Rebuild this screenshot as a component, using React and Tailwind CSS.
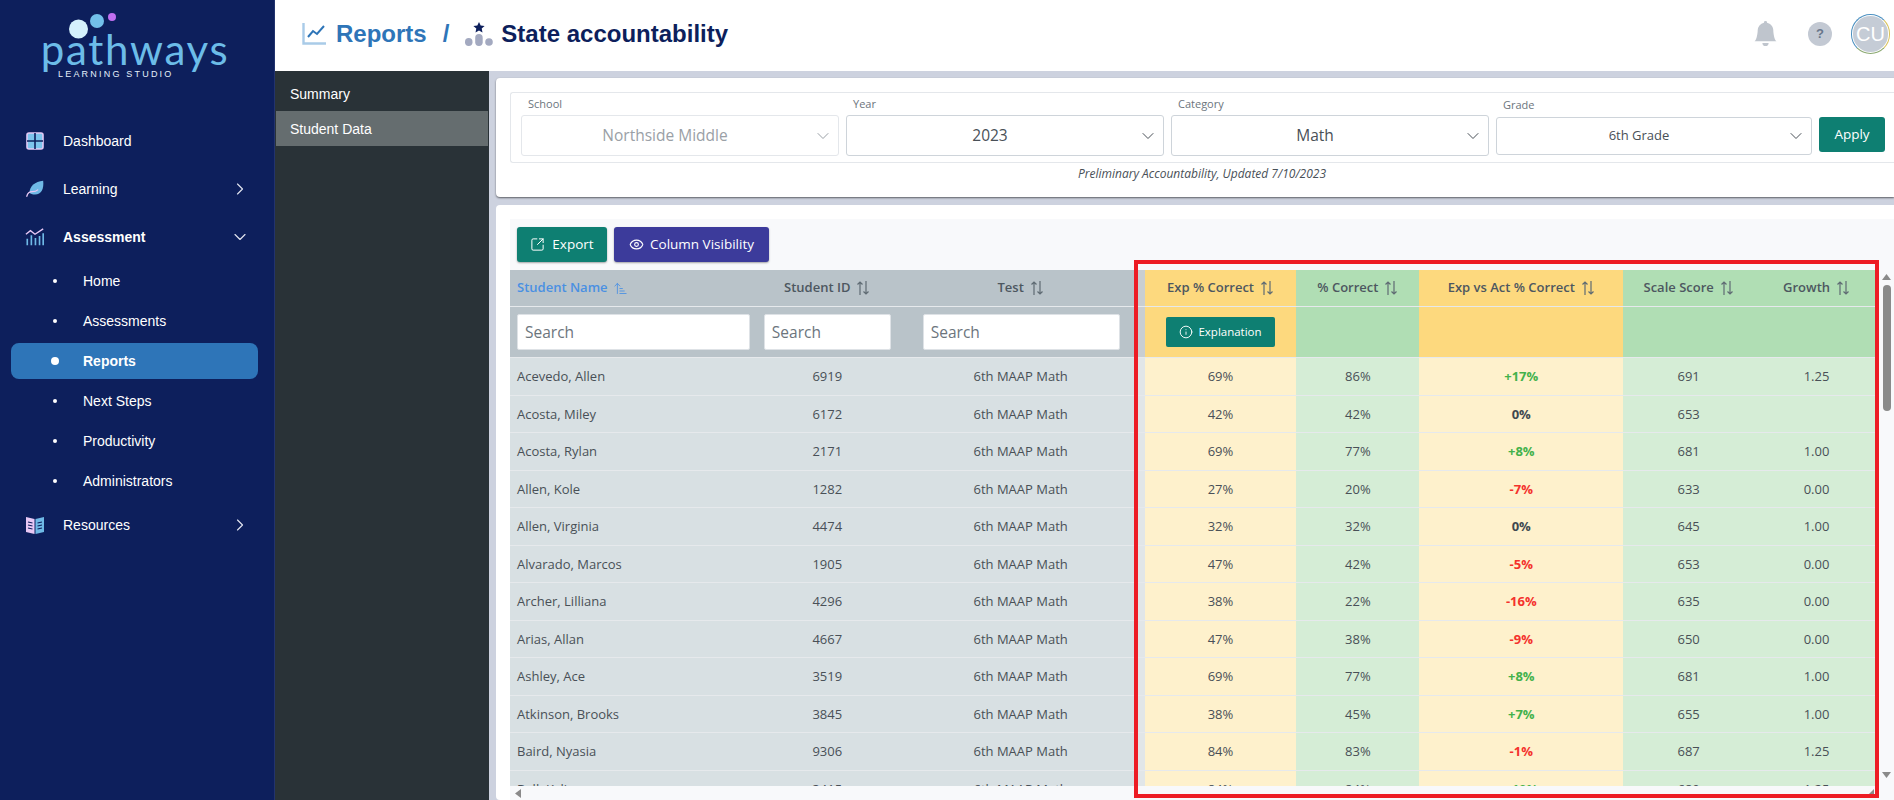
import React from "react";
import { ArrowUpNarrowWide, ChevronDown, ChevronRight, Eye, Info, SquareArrowOutUpRight } from "lucide-react";
import { BsBellFill } from "react-icons/bs";

const rows = [
  ["Acevedo, Allen", "6919", "69%", "86%", "+17%", "691", "1.25"],
  ["Acosta, Miley", "6172", "42%", "42%", "0%", "653", ""],
  ["Acosta, Rylan", "2171", "69%", "77%", "+8%", "681", "1.00"],
  ["Allen, Kole", "1282", "27%", "20%", "-7%", "633", "0.00"],
  ["Allen, Virginia", "4474", "32%", "32%", "0%", "645", "1.00"],
  ["Alvarado, Marcos", "1905", "47%", "42%", "-5%", "653", "0.00"],
  ["Archer, Lilliana", "4296", "38%", "22%", "-16%", "635", "0.00"],
  ["Arias, Allan", "4667", "47%", "38%", "-9%", "650", "0.00"],
  ["Ashley, Ace", "3519", "69%", "77%", "+8%", "681", "1.00"],
  ["Atkinson, Brooks", "3845", "38%", "45%", "+7%", "655", "1.00"],
  ["Baird, Nyasia", "9306", "84%", "83%", "-1%", "687", "1.25"],
  ["Ball, Kylie", "3415", "84%", "84%", "+10%", "689", "1.25"],
];

const subItems = ["Home", "Assessments", "Reports", "Next Steps", "Productivity", "Administrators"];

function SortIcon() {
  return (
    <svg width="14" height="16" viewBox="0 0 14 16" fill="none" stroke="currentColor" strokeWidth="1.2" className="ml-[6px] text-[#5f6b73]">
      <path d="M4 15V2M1.5 4.5 4 2l2.5 2.5" />
      <path d="M10 1v13M7.5 11.5 10 14l2.5-2.5" />
    </svg>
  );
}

function HeadCell({ label, className }) {
  return (
    <div className={`flex items-center justify-center text-[13px] font-semibold text-[#4d5760] ${className}`}>
      {label}
      <SortIcon />
    </div>
  );
}

function Select({ label, value, disabled, small }) {
  return (
    <div className={small ? "w-[316px] shrink-0" : "w-[318px] shrink-0"}>
      <div className={`text-[11px] leading-[14px] text-[#6c757d] pl-[7px] ${small ? "pt-[5px] mb-[5px]" : "pt-[4px] mb-[4px]"}`}>{label}</div>
      <div className={`flex items-center rounded-[3px] border bg-white ${small ? "h-[38px]" : "h-[41px]"} ${disabled ? "border-[#e4e7eb]" : "border-[#ced4da]"}`}>
        <span className={`flex-1 text-center pr-[5px] ${small ? "text-[13px]" : "text-[15.5px]"} ${disabled ? "text-[#9aa0a6]" : "text-[#495057]"}`}>{value}</span>
        <ChevronDown size={20} strokeWidth={1.2} className={`mr-[5px] ${disabled ? "text-[#9aa0a6]" : "text-[#495057]"}`} />
      </div>
    </div>
  );
}

function SearchBox({ className }) {
  return (
    <div className={`h-[36px] rounded-[2px] bg-white border border-[#dee2e6] flex items-center pl-[7px] pt-[2px] text-[15.5px] text-[#6c757d] ${className}`}>
      Search
    </div>
  );
}

function DashboardIcon() {
  return (
    <svg width="18" height="18" viewBox="0 0 18 18" fill="none">
      <rect x="1" y="1" width="16" height="16" rx="2" fill="#7cc4ec" stroke="#e3c9f5" strokeWidth="1.6" />
      <path d="M9 1v16M1 9h16" stroke="#0d1f5c" strokeWidth="1.6" />
    </svg>
  );
}

function LeafIcon() {
  return (
    <svg width="22" height="20" viewBox="0 0 22 20" fill="none">
      <path d="M20 1c1 9-2 15-9 15-3 0-5-1-6-2 0-7 6-12 15-13z" fill="#6fb9e6" />
      <path d="M2 18c1-4 4-5 6-5s4 0 6-2" stroke="#e8c8f5" strokeWidth="1.4" strokeLinecap="round" />
    </svg>
  );
}

function AssessmentIcon() {
  return (
    <svg width="22" height="20" viewBox="0 0 22 20" fill="none">
      <path d="M1 7l5-4 5 4 9-6" stroke="#e8c8f5" strokeWidth="1.5" />
      <path d="M2.5 19v-7M7 19V8M11.5 19v-8M16 19V9M20 19V6" stroke="#6fb9e6" strokeWidth="1.8" />
    </svg>
  );
}

function BookIcon() {
  return (
    <svg width="20" height="20" viewBox="0 0 20 20" fill="none">
      <path d="M1 2l8.5 2v15L1 17z" fill="#e8c8f5" />
      <path d="M19 2l-8.5 2v15l8.5-2z" fill="#6fb9e6" />
      <path d="M3 7l4.5 1M3 10l4.5 1M3 13l4.5 1M17 7l-4.5 1M17 10l-4.5 1M17 13l-4.5 1" stroke="#0d1f5c" strokeWidth="1.2" />
    </svg>
  );
}

function NavItem({ icon, label, bold, open, arrow }) {
  return (
    <div className="h-[48px] flex items-center pl-[25px] pr-[24px]">
      <div className="w-[20px] flex justify-center">{icon}</div>
      <span className={`ml-[18px] flex-1 text-[14px] text-white ${bold ? "font-bold" : ""}`}>{label}</span>
      {arrow && (open
        ? <ChevronDown size={20} strokeWidth={1.4} className="text-[#dfe3ee]" />
        : <ChevronRight size={20} strokeWidth={1.4} className="text-[#dfe3ee]" />)}
    </div>
  );
}

function Diff({ value }) {
  let color = "text-[#3f4850]";
  if (value.startsWith("+")) color = "text-[#43b14b]";
  if (value.startsWith("-")) color = "text-[#f4322c]";
  return <span className={`font-bold ${color}`}>{value}</span>;
}

export default function App() {
  return (
    <div className="relative flex h-[800px] w-[1894px] overflow-hidden font-['Liberation_Sans',sans-serif]">
      {/* main nav */}
      <aside className="w-[275px] shrink-0 bg-[#0d1f5c] border-r border-[#22336e]">
        <div className="h-[113px] relative">
          <svg width="130" height="30" viewBox="0 0 130 30" className="absolute left-[60px] top-[12px]">
            <circle cx="18.5" cy="17" r="9.5" fill="#d5f2fd" />
            <circle cx="37" cy="9" r="7" fill="#72c0ea" />
            <circle cx="52" cy="5" r="4" fill="#c06ff0" />
          </svg>
          <div className="absolute left-[35px] top-[21px] w-[200px] text-center font-['Lato',sans-serif] text-[42px] leading-[56px] tracking-[1.7px] text-[#6cbce8]">pathways</div>
          <div className="absolute left-[58px] top-[69px] text-[9px] leading-[10px] tracking-[2.2px] text-[#e3effa]">LEARNING STUDIO</div>
        </div>
        <div className="pt-[4px]">
          <NavItem icon={<DashboardIcon />} label="Dashboard" />
          <NavItem icon={<LeafIcon />} label="Learning" arrow />
          <NavItem icon={<AssessmentIcon />} label="Assessment" bold arrow open />
          <div className="pt-[2px] pl-[11px] pr-[16px] flex flex-col gap-[4px]">
            {subItems.map((item) => {
              const active = item === "Reports";
              return (
                <div key={item} className={`h-[36px] flex items-center rounded-[8px] ${active ? "bg-[#2e75b8] font-bold" : ""}`}>
                  <div className="w-[44px] flex justify-end">
                    <span className={`rounded-full bg-white ${active ? "w-[8px] h-[8px] mr-[-4px]" : "w-[4px] h-[4px] mr-[-2px]"}`} />
                  </div>
                  <span className="ml-[28px] text-[14px] text-white">{item}</span>
                </div>
              );
            })}
          </div>
          <div className="mt-[2px]">
            <NavItem icon={<BookIcon />} label="Resources" arrow />
          </div>
        </div>
      </aside>

      <div className="flex-1 min-w-0 flex flex-col">
        {/* top bar */}
        <header className="h-[71px] shrink-0 bg-white flex items-center pl-[27px] pr-[4px] pb-[4px]">
          <svg width="24" height="22" viewBox="0 0 24 22" fill="none">
            <path d="M1.5 0v20.5H24" stroke="#a9cbe8" strokeWidth="2.4" />
            <path d="M6 14l5-6 4 3 7-8" stroke="#2e75b8" strokeWidth="2" />
          </svg>
          <span className="ml-[10px] text-[24px] font-bold text-[#2e75b8]">Reports</span>
          <span className="ml-[16px] text-[24px] font-bold text-[#2e75b8]">/</span>
          <svg width="28" height="24" viewBox="0 0 28 24" className="ml-[16px]">
            <path d="M14 0l1.7 3.6 3.9.4-2.9 2.6.8 3.8L14 8.6l-3.5 1.8.8-3.8L8.4 4l3.9-.4z" fill="#0d1f5c" />
            <rect x="0" y="16" width="7.5" height="8" rx="3.7" fill="#a3a9c0" />
            <rect x="10.2" y="12" width="7.5" height="12" rx="3.7" fill="#a3a9c0" />
            <circle cx="24" cy="20" r="3.8" fill="#a3a9c0" />
          </svg>
          <span className="ml-[8px] text-[24px] font-bold text-[#0d1f5c]">State accountability</span>
          <div className="ml-auto flex items-center">
            <BsBellFill size={25} className="text-[#bfc5cd]" />
            <div className="ml-[30px] w-[24px] h-[24px] rounded-full bg-[#c3c9d3] flex items-center justify-center text-[13px] font-bold text-[#68768a]">?</div>
            <div className="ml-[19px] w-[39px] h-[40px] rounded-full border border-[#4a8fc0] border-r-[#d9c25a] border-b-[#8aa870] p-[1px]">
              <div className="w-full h-full rounded-full bg-[#c5ccd6] flex items-center justify-center text-[20px] text-white">CU</div>
            </div>
          </div>
        </header>

        <div className="flex-1 min-h-0 flex">
          {/* report nav */}
          <nav className="w-[214px] shrink-0 bg-[#293237] pt-[5px] pl-[1px] text-[14px] text-white">
            <div className="h-[35px] flex items-center pl-[14px] pt-[1px]">Summary</div>
            <div className="h-[35px] flex items-center pl-[14px] pt-[1px] bg-[#656d6f] mr-[1px]">Student Data</div>
          </nav>

          <main className="flex-1 min-w-0 bg-[#cdd2df] pt-[7px] pl-[7px] font-['Open_Sans',sans-serif]">
            {/* filters */}
            <section className="h-[119px] bg-white rounded-l-[4px] shadow-[0_1px_2px_rgba(0,0,0,0.55)] pt-[14px] pl-[14px]">
              <div className="h-[71px] border border-r-0 border-[#e4e7eb] rounded-l-[3px] flex pl-[10px] gap-[7px]">
                <Select label="School" value="Northside Middle" disabled />
                <Select label="Year" value="2023" />
                <Select label="Category" value="Math" />
                <div className="flex items-start">
                  <Select label="Grade" value="6th Grade" small />
                  <button className="ml-[7px] mt-[24px] w-[66px] h-[35px] rounded-[3px] bg-[#0e7f72] text-[13.5px] text-white">Apply</button>
                </div>
              </div>
              <div className="mt-[3px] text-center italic text-[12px] leading-[16px] text-[#495057]">Preliminary Accountability, Updated 7/10/2023</div>
            </section>

            {/* student table */}
            <section className="mt-[8px] h-[595px] bg-white rounded-l-[4px] pt-[14px] pl-[14px]">
              <div className="h-[581px] bg-[#f8f9fb] flex flex-col">
                <div className="h-[51px] shrink-0 flex items-start pt-[8px] pl-[7px] gap-[7px] text-[13.5px] text-white">
                  <button className="h-[35px] w-[90px] rounded-[3px] bg-[#0e7f72] shadow-[0_1px_2px_rgba(0,0,0,0.35)] flex items-center justify-center gap-[7px]">
                    <SquareArrowOutUpRight size={15} strokeWidth={1.6} />
                    Export
                  </button>
                  <button className="h-[35px] w-[155px] rounded-[3px] bg-[#3c3b9b] shadow-[0_1px_2px_rgba(0,0,0,0.35)] flex items-center justify-center gap-[6px]">
                    <Eye size={15} strokeWidth={1.8} />
                    Column Visibility
                  </button>
                </div>

                <div className="flex-1 min-h-0 flex">
                  <div className="w-[1369px] shrink-0 flex flex-col">
                    <div className="h-[516px] shrink-0 overflow-hidden">
                      <div className="flex h-[37px] border-b border-[#e6e9ec]">
                        <div className="w-[247px] flex items-center pl-[7px] text-[13px] font-semibold text-[#4a90e2] bg-[#b9c3c9]">
                          Student Name
                          <ArrowUpNarrowWide size={15} strokeWidth={1.4} className="ml-[5px]" />
                        </div>
                        <HeadCell label="Student ID" className="w-[141px] bg-[#b9c3c9]" />
                        <HeadCell label="Test" className="w-[240px] pl-[17px] pr-[11px] bg-[#b9c3c9]" />
                        <div className="w-[7px] bg-[#c9ced1]" />
                        <HeadCell label="Exp % Correct" className="w-[152px] bg-[#fdd97e]" />
                        <HeadCell label="% Correct" className="w-[123px] bg-[#b0deb4]" />
                        <HeadCell label="Exp vs Act % Correct" className="w-[204px] bg-[#fdd97e]" />
                        <HeadCell label="Scale Score" className="w-[131px] bg-[#b0deb4]" />
                        <HeadCell label="Growth" className="w-[125px] bg-[#b0deb4]" />
                      </div>
                      <div className="flex h-[51px] border-b border-[#e6e9ec]">
                        <div className="w-[247px] flex items-center px-[7px] bg-[#b9c3c9]"><SearchBox className="w-full" /></div>
                        <div className="w-[141px] flex items-center px-[7px] bg-[#b9c3c9]"><SearchBox className="w-full" /></div>
                        <div className="w-[240px] flex items-center pl-[25px] pr-[18px] bg-[#b9c3c9]"><SearchBox className="w-full" /></div>
                        <div className="w-[7px] bg-[#c9ced1]" />
                        <div className="w-[152px] flex items-center justify-center bg-[#fdd97e]">
                          <button className="w-[109px] h-[30px] rounded-[2px] bg-[#0e7f72] flex items-center justify-center gap-[5px] text-[11.5px] text-white">
                            <Info size={14} strokeWidth={1.6} />
                            Explanation
                          </button>
                        </div>
                        <div className="w-[123px] bg-[#b0deb4]" />
                        <div className="w-[204px] bg-[#fdd97e]" />
                        <div className="w-[256px] bg-[#b0deb4]" />
                      </div>
                      {rows.map((r) => (
                        <div key={r[0]} className="flex h-[37.5px] border-b border-[#e6e9ec] text-[13px] text-[#495057]">
                          <div className="w-[247px] flex items-center pl-[7px] pt-[1px] bg-[#d8e0e3]">{r[0]}</div>
                          <div className="w-[141px] flex items-center justify-center pt-[1px] bg-[#d8e0e3]">{r[1]}</div>
                          <div className="w-[240px] flex items-center justify-center pl-[17px] pr-[11px] pt-[1px] bg-[#d8e0e3]">6th MAAP Math</div>
                          <div className="w-[7px] bg-[#e1e6e8]" />
                          <div className="w-[152px] flex items-center justify-center pt-[1px] bg-[#fef1cc]">{r[2]}</div>
                          <div className="w-[123px] flex items-center justify-center pt-[1px] bg-[#d5edd6]">{r[3]}</div>
                          <div className="w-[204px] flex items-center justify-center pt-[1px] bg-[#fef1cc]"><Diff value={r[4]} /></div>
                          <div className="w-[131px] flex items-center justify-center pt-[1px] bg-[#d5edd6]">{r[5]}</div>
                          <div className="w-[125px] flex items-center justify-center pt-[1px] bg-[#d5edd6]">{r[6]}</div>
                        </div>
                      ))}
                    </div>
                    {/* horizontal scrollbar arrows */}
                    <div className="flex-1 flex items-center justify-between pl-[5px] pr-[5px] text-[#8a8a8a]">
                      <svg width="6" height="9" viewBox="0 0 6 9" fill="currentColor"><path d="M6 0v9L0 4.5z" /></svg>
                      <svg width="8" height="8" viewBox="0 0 8 8" fill="currentColor"><path d="M8 0v8H0z" /></svg>
                    </div>
                  </div>
                  {/* vertical scrollbar */}
                  <div className="flex-1 flex flex-col items-center pt-[4px] text-[#8a8a8a]">
                    <svg width="9" height="6" viewBox="0 0 9 6" fill="currentColor"><path d="M4.5 0 9 6H0z" /></svg>
                    <div className="mt-[5px] w-[8px] h-[126px] rounded-[4px] bg-[#8a8a8a]" />
                    <svg width="9" height="6" viewBox="0 0 9 6" fill="currentColor" className="mt-[361px]"><path d="M4.5 6 9 0H0z" /></svg>
                  </div>
                </div>
              </div>
            </section>
          </main>
        </div>
      </div>

      {/* red highlight box drawn on top of the screenshot */}
      <div className="absolute left-[1134px] top-[260px] w-[745px] h-[538px] border-[4px] border-[#ed1c24] pointer-events-none" />
    </div>
  );
}
